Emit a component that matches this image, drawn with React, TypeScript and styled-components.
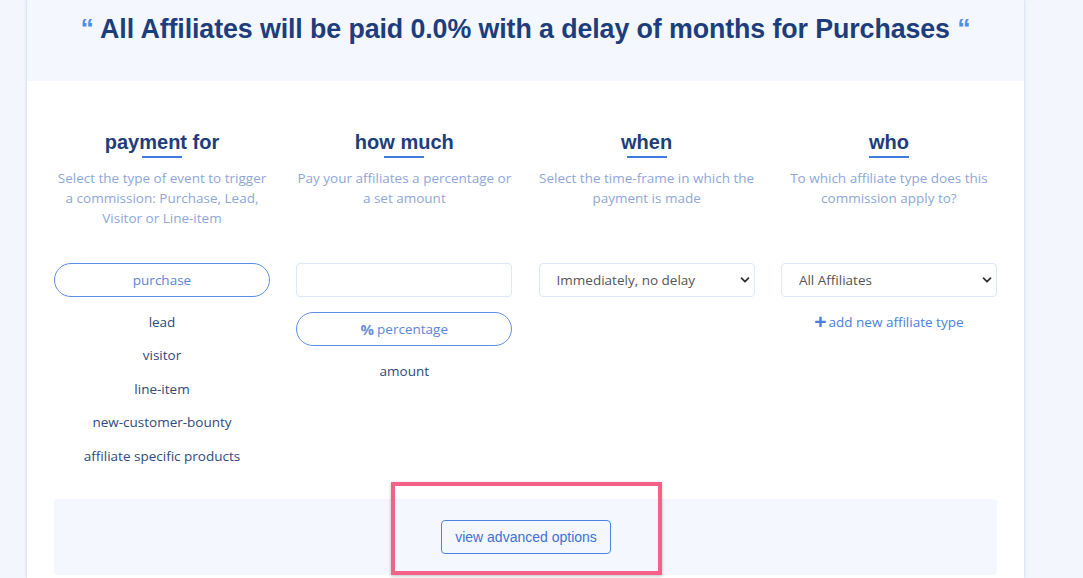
import React from 'react';
import styled, {createGlobalStyle} from 'styled-components';

const GlobalStyle = createGlobalStyle`
  html, body {
    margin: 0;
    padding: 0;
    background: #f3f6fc;
    font-family: "Open Sans", "Liberation Sans", sans-serif;
  }
`;

type Column = {
    title: string;
    description: string[];
};

const columns: Column[] = [
    {title: 'payment for', description: ['Select the type of event to trigger', 'a commission: Purchase, Lead,', 'Visitor or Line-item']},
    {title: 'how much', description: ['Pay your affiliates a percentage or', 'a set amount']},
    {title: 'when', description: ['Select the time-frame in which the', 'payment is made']},
    {title: 'who', description: ['To which affiliate type does this', 'commission apply to?']},
];

const eventTypes = ['lead', 'visitor', 'line-item', 'new-customer-bounty', 'affiliate specific products'];

const Chevron = () => (
    <ChevronIcon width="12" height="12" viewBox="0 0 12 12">
        <path d="M2.5 4.2 L6 7.7 L9.5 4.2" fill="none" stroke="#333" strokeWidth="1.8" strokeLinecap="round" strokeLinejoin="round"/>
    </ChevronIcon>
);

const Select: React.FC<{ value: string }> = ({value}) => (
    <SelectWrap>
        <SelectBox defaultValue={value}>
            <option>{value}</option>
        </SelectBox>
        <Chevron/>
    </SelectWrap>
);

export default function App() {
    return (
        <>
            <GlobalStyle/>
            <Page>
                <Card>
                    <Summary>
                        <Headline>
                            <Quote>“</Quote> All Affiliates will be paid 0.0% with a delay of months for Purchases <Quote>“</Quote>
                        </Headline>
                    </Summary>
                    <Body>
                        <Grid>
                            {columns.map((col) => (
                                <ColumnHead key={col.title}>
                                    <HeadTitle>{col.title}</HeadTitle>
                                    <Underline/>
                                    <Description>
                                        {col.description.map((line) => <div key={line}>{line}</div>)}
                                    </Description>
                                </ColumnHead>
                            ))}

                            <Stack>
                                <PillButton>purchase</PillButton>
                                {eventTypes.map((t) => <OptionItem key={t}>{t}</OptionItem>)}
                            </Stack>

                            <Stack>
                                <TextInput type="text"/>
                                <PillButton $spaced><Percent>%</Percent> percentage</PillButton>
                                <OptionItem>amount</OptionItem>
                            </Stack>

                            <Stack>
                                <Select value="Immediately, no delay"/>
                            </Stack>

                            <Stack>
                                <Select value="All Affiliates"/>
                                <AddLink><Plus>+</Plus>add new affiliate type</AddLink>
                            </Stack>
                        </Grid>

                        <AdvancedPanel>
                            <AdvancedButton>view advanced options</AdvancedButton>
                            <Highlight/>
                        </AdvancedPanel>
                    </Body>
                </Card>
            </Page>
        </>
    );
}

const Page = styled.div`
  min-height: 578px;
  padding: 0 58px 0 27px;
  box-sizing: border-box;
`;

const Card = styled.div`
  background: #fff;
  width: 997px;
  min-height: 578px;
  box-shadow: 0 0 3px rgba(150, 170, 215, 0.55);
`;

const Summary = styled.div`
  background: #f4f7fd;
  height: 81px;
  padding-top: 13px;
  box-sizing: border-box;
  text-align: center;
`;

const Headline = styled.h1`
  margin: 0;
  font-family: "Liberation Sans", Arial, sans-serif;
  font-size: 26.8px;
  font-weight: 700;
  line-height: 32px;
  color: #1d3d7c;
  letter-spacing: -0.1px;
`;

const Quote = styled.span`
  color: #4c8fe4;
`;

const Body = styled.div`
  padding: 49px 27px 3px;
`;

const Grid = styled.div`
  display: grid;
  grid-template-columns: repeat(4, 216px);
  column-gap: 26.3px;
`;

const ColumnHead = styled.div`
  display: flex;
  flex-direction: column;
  align-items: center;
  text-align: center;
`;

const HeadTitle = styled.div`
  font-family: "Liberation Sans", Arial, sans-serif;
  font-size: 20px;
  font-weight: 700;
  line-height: 24px;
  color: #1d3d7c;
`;

const Underline = styled.div`
  width: 40px;
  height: 2px;
  background: #3c7ddd;
  margin-top: 2px;
  margin-bottom: 10px;
`;

const Description = styled.div`
  font-size: 13.5px;
  line-height: 20px;
  color: #8ea7d8;
  min-height: 60px;
  margin-bottom: 35px;
`;

const Stack = styled.div`
  display: flex;
  flex-direction: column;
  align-items: stretch;
`;

const PillButton = styled.button<{ $spaced?: boolean }>`
  height: 34px;
  margin-top: ${(p) => (p.$spaced ? '15px' : '0')};
  margin-bottom: 8px;
  border: 1px solid #5d8fe2;
  border-radius: 17px;
  background: #fff;
  color: #5a86d8;
  font-family: "Open Sans", sans-serif;
  font-size: 13.5px;
  display: flex;
  align-items: center;
  justify-content: center;
  padding: 0;
`;

const Percent = styled.span`
  font-weight: 700;
  font-size: 15px;
  color: #6b8fd2;
  margin-right: 3px;
`;

const OptionItem = styled.div`
  height: 33.5px;
  display: flex;
  align-items: center;
  justify-content: center;
  font-size: 13.5px;
  color: #2f4a7c;
`;

const TextInput = styled.input`
  height: 34px;
  box-sizing: border-box;
  border: 1px solid #dfe8f7;
  border-radius: 4px;
  outline: none;
  padding: 0 12px;
`;

const SelectWrap = styled.div`
  position: relative;
  height: 34px;
  margin-bottom: 8px;
`;

const SelectBox = styled.select`
  appearance: none;
  width: 100%;
  height: 34px;
  box-sizing: border-box;
  border: 1px solid #dfe8f7;
  border-radius: 4px;
  background: #fff;
  padding: 0 30px 0 17px;
  font-family: "Open Sans", sans-serif;
  font-size: 13.5px;
  color: #555;
  outline: none;
`;

const ChevronIcon = styled.svg`
  position: absolute;
  right: 4px;
  top: 11px;
  pointer-events: none;
`;

const AddLink = styled.div`
  height: 33.5px;
  display: flex;
  align-items: center;
  justify-content: center;
  font-size: 13.5px;
  color: #4a80dc;
`;

const Plus = styled.span`
  font-family: "Liberation Sans", Arial, sans-serif;
  font-size: 21px;
  font-weight: 700;
  margin-right: 2px;
  line-height: 1;
`;

const AdvancedPanel = styled.div`
  position: relative;
  margin-top: 26px;
  height: 76px;
  background: #f4f7fd;
  border-radius: 4px;
  display: flex;
  align-items: center;
  justify-content: center;
`;

const AdvancedButton = styled.button`
  height: 34px;
  padding: 0 13px;
  border: 1px solid #4d82dd;
  border-radius: 4px;
  background: transparent;
  color: #3d72d6;
  font-family: "Liberation Sans", Arial, sans-serif;
  font-size: 14px;
  margin-left: 1px;
`;

const Highlight = styled.div`
  position: absolute;
  left: 337px;
  top: -17px;
  width: 271px;
  height: 93px;
  box-sizing: border-box;
  border: 4px solid #f4628a;
  box-shadow: 0 1px 3px rgba(0, 0, 0, 0.25);
  pointer-events: none;
`;
